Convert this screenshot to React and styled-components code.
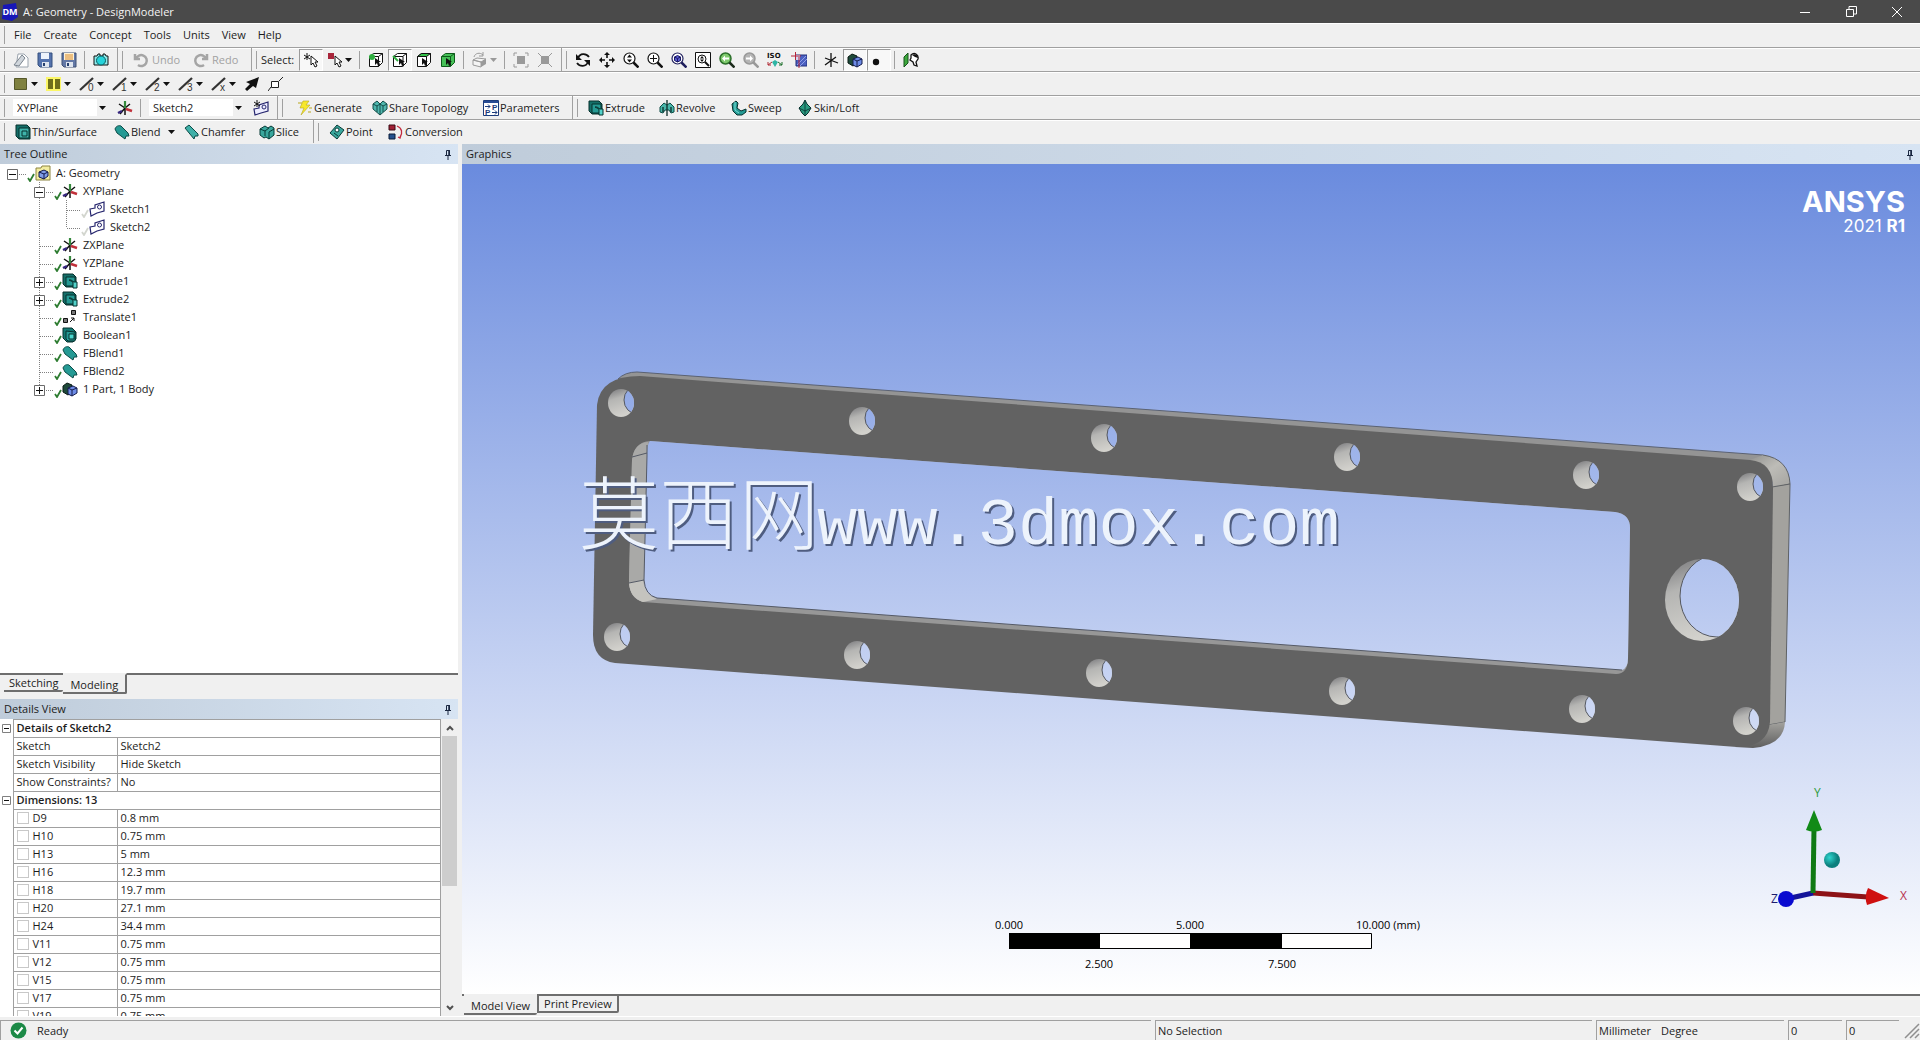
import React, { useState } from 'react'
import styled, { createGlobalStyle, css } from 'styled-components'

const GlobalStyle = createGlobalStyle`
  * {
    box-sizing: border-box;
  }

  body {
    margin: 0;
    background: #f0f0f0;
    color: #1c1c1c;
    font-family: "Open Sans", "Noto Sans", sans-serif;
    font-size: 11px;
    line-height: 16px;
    overflow: hidden;
  }

  button, input, select {
    font: inherit;
    color: inherit;
  }
`

const Window = styled.div`
  display: flex;
  flex-direction: column;
  height: 100vh;
`

// Title bar
const TitleBar = styled.header`
  display: flex;
  align-items: center;
  height: 23px;
  flex: none;
  background: #4a4a4a;
  color: #f4f4f4;
`

const AppBadge = styled.svg`
  width: 16px;
  height: 18px;
  margin: 0 5px 0 2px;
`

const Title = styled.h1`
  flex: 1;
  margin: 0;
  font-size: 11px;
  font-weight: 400;
`

const WindowButton = styled.button`
  display: flex;
  align-items: center;
  justify-content: center;
  width: 46px;
  height: 20px;
  padding: 0;
  border: 0;
  background: none;
  color: #fff;
`

// Menu and toolbars
const Bar = styled.div`
  display: flex;
  align-items: stretch;
  height: ${(props) => (props.$menu ? '25px' : '24px')};
  flex: none;
  border-bottom: 1px solid ${(props) => (props.$last ? '#f0f0f0' : '#a0a0a0')};
  box-shadow: inset 0 1px #fff;
`

const Group = styled.div`
  display: flex;
  align-items: center;
  padding-right: ${(props) => (props.$open ? '0' : '4px')};
  border-right: ${(props) => (props.$open ? '0' : '1px solid #a0a0a0')};

  &::before {
    content: '';
    flex: none;
    width: 1px;
    height: 18px;
    margin: 0 4px;
    background: #a0a0a0;
  }
`

const MenuItem = styled.button`
  padding: 0 7px 0 5px;
  border: 0;
  background: none;
`

const Separator = styled.span`
  width: 1px;
  height: 18px;
  margin: 0 4px 0 3px;
  background: #a0a0a0;
`

const ToolButton = styled.button`
  display: flex;
  align-items: center;
  justify-content: center;
  width: ${(props) => (props.$menu ? '33px' : '24px')};
  height: 22px;
  padding: 0;
  border: 1px solid transparent;
  background: none;
  gap: 2px;

  ${(props) => props.$pressed && css`
    border-color: #9a9a9a #fff #fff #9a9a9a;
    background: #f8f8f8;
  `}
`

const TextButton = styled.button`
  display: flex;
  align-items: center;
  width: ${(props) => props.$width}px;
  height: 22px;
  padding: 0 0 0 ${(props) => (props.$wide ? '6px' : '4px')};
  border: 0;
  background: none;
  gap: ${(props) => (props.$wide ? '3px' : '1px')};
  white-space: nowrap;

  &:disabled {
    color: #a2a2a2;
  }
`

const SelectCaption = styled.span`
  width: 38px;
`

const Labeled = styled.div`
  display: flex;
  align-items: center;
  padding-left: ${(props) => props.$space || 2}px;
`

const Combo = styled.label`
  display: flex;
  align-items: center;
  width: 93px;
  gap: 2px;
  margin: 0 7px 0 4px;

  select {
    flex: 1;
    height: 17px;
    padding: 0 4px;
    border: 0;
    background: #fff;
    appearance: none;
  }
`

const Glyph = styled.svg`
  flex: none;
  width: 16px;
  height: 16px;
`

const CaretShape = styled.svg`
  flex: none;
  width: 7px;
  height: 4px;
  margin-left: ${(props) => (props.$far ? '6px' : '0')};
`

// Work area
const Workspace = styled.main`
  display: flex;
  flex: 1;
  min-height: 0;
  gap: 4px;
`

const SideColumn = styled.aside`
  display: flex;
  flex-direction: column;
  width: 458px;
  flex: none;
`

const Stage = styled.section`
  display: flex;
  flex-direction: column;
  flex: 1;
  min-width: 0;
`

const PanelHeader = styled.div`
  display: flex;
  align-items: center;
  justify-content: space-between;
  height: 20px;
  flex: none;
  padding: 0 6px 0 4px;
  background: linear-gradient(90deg, #bfccda, #d7e4f3);

  h2 {
    margin: 0;
    font-size: 11px;
    font-weight: 400;
  }
`

const PinButton = styled.button`
  display: flex;
  padding: 0;
  border: 0;
  background: none;
`

const TreeList = styled.ul`
  flex: 1;
  min-height: 0;
  margin: 0;
  padding: 0;
  list-style: none;
  background: #fff;
`

const TreeRow = styled.li`
  display: flex;
  align-items: center;
  height: 18px;
`

const Guide = styled.svg`
  flex: none;
  width: 27px;
  height: 18px;
`

const Tick = styled.svg`
  flex: none;
  width: 8px;
  height: 9px;
  margin-top: 8px;
`

const TreeLabel = styled.button`
  margin-left: 4px;
  padding: 0 1px;
  border: 0;
  background: none;
  line-height: 18px;
`

const TabStrip = styled.div`
  display: flex;
  align-items: flex-start;
  height: ${(props) => (props.$tall ? '26px' : '22px')};
  flex: none;
  padding-left: ${(props) => (props.$tall ? '4px' : '2px')};
  border-top: 2px solid #6e6e6e;
`

const Tab = styled.button`
  height: ${(props) => (props.$active ? '21px' : '19px')};
  margin-top: -2px;
  padding: ${(props) => (props.$active ? '3px 7px 0' : '1px 5px 0')};
  border: 0 solid #6e6e6e;
  border-top: ${(props) => (props.$active ? '2px solid #f0f0f0' : '2px solid #6e6e6e')};
  border-bottom-width: 2px;
  border-right-width: ${(props) => (props.$edge ? '2px' : '0')};
  border-left-width: ${(props) => (props.$boxed ? '2px' : '0')};
  border-radius: 0 0 2px 0;
  background: #f0f0f0;
  line-height: 14px;
`

const DetailsPanel = styled.div`
  display: flex;
  flex-direction: column;
  height: 317px;
  flex: none;
`

const DetailsBody = styled.div`
  display: flex;
  flex: 1;
  min-height: 0;
  background: #fff;
`

const TableClip = styled.div`
  flex: 1;
  overflow: hidden;
`

const Table = styled.table`
  width: 100%;
  border-collapse: collapse;
  table-layout: fixed;

  tr {
    height: 18px;
  }

  th, td {
    padding: 0 3px 1px;
    border: 1px solid #a0a0a0;
    line-height: 16px;
    text-align: left;
    font-weight: 400;
    white-space: nowrap;
  }

  th[colspan] {
    font-weight: 600;
  }
`

const Gutter = styled.td`
  && {
    padding: 0 0 0 2px;
    border-width: 0 1px 0 0;
  }
`

const Fold = styled.button`
  display: flex;
  padding: 0;
  border: 0;
  background: none;
`

const DimensionLabel = styled.label`
  display: flex;
  align-items: center;
  gap: 4px;

  input {
    width: 12px;
    height: 12px;
    margin: 0;
    border: 1px solid #c8c8c8;
    background: #fff;
    appearance: none;
  }
`

const ScrollTrack = styled.div`
  display: flex;
  flex-direction: column;
  width: 17px;
  padding: 0 1px;
  background: #f0f0f0;
`

const ScrollArrow = styled.button`
  display: flex;
  align-items: center;
  justify-content: center;
  height: 17px;
  padding: 0;
  border: 0;
  background: none;
`

const ScrollThumb = styled.div`
  height: 150px;
  margin-bottom: auto;
  background: #cdcdcd;
`

const Viewport = styled.div`
  position: relative;
  flex: 1;
  min-height: 0;
  background: linear-gradient(#6a8bde, #fff);
`

const Scene = styled.svg`
  display: block;
  width: 100%;
  height: 100%;
`

const Brand = styled.div`
  position: absolute;
  top: 22px;
  right: 15px;
  color: #fff;
  font-family: Inter, sans-serif;
  font-size: 17px;
  line-height: 16px;
  text-align: right;

  strong {
    display: block;
    font-size: 29px;
    font-weight: 700;
    line-height: 32px;
  }
`

// Status bar
const StatusBar = styled.footer`
  display: flex;
  height: 24px;
  flex: none;
  gap: 4px;
  padding-top: 3px;
  border-top: 1px solid #fff;
`

const StatusCell = styled.div`
  display: flex;
  align-items: center;
  flex: ${(props) => (props.$width ? `0 0 ${props.$width}px` : 1)};
  gap: 10px;
  padding-left: ${(props) => (props.$width ? '2px' : '9px')};
  border: 0 solid #a0a0a0;
  border-top-width: 1px;
  border-left-width: 1px;
`

const Caret = ({ far, color = '#111' }) => (
  <CaretShape viewBox="0 0 7 4" $far={far} aria-hidden="true">
    <path d="M0 0h7L3.5 4z" fill={color} />
  </CaretShape>
)

const TEAL = '#259a94'

const cursor = <path d="M8 4v9l2-2 2 4 2-1-2-4h3z" fill="#fff" stroke="#111" />
const cubeFrame = 'M1.500 4.500l4-3h9v9l-4 4h-9z'
const lens = (ring = '#111') => (
  <>
    <circle cx="6.500" cy="6.500" r="5.500" fill="#fff" stroke={ring} strokeWidth="1.200" />
    <path d="M10.500 10.500l5 5" stroke={ring} strokeWidth="2.500" />
  </>
)
const edgeLine = (label) => (
  <>
    <path d="M1 14L14 2" stroke="#333" strokeWidth="2.200" />
    <text x="9" y="15" fontSize="10" fontFamily="Liberation Sans, sans-serif" fill="#333">{label}</text>
  </>
)

const drawings = {
  newSketch: <><path d="M5 2h6l4 4v9H3z" fill="#fff" stroke="#9aa3ad" /><path d="M1 13L9 3l3 3-6 8z" fill="#cfd5db" stroke="#7b858f" /></>,
  save: <><path d="M1 1h14v14H3l-2-2z" fill="#5573ad" stroke="#34507f" /><path d="M4 1h8v6H4z" fill="#eef3fb" /><path d="M5 10h7v5H5z" fill="#dfe5ee" /><path d="M6 11h2v3H6z" fill="#27406f" /></>,
  saveAll: <><path d="M1 1h14v14H3l-2-2z" fill="#6378a6" stroke="#3f5075" /><path d="M3 1h10v7H3z" fill="#fff3d6" /><path d="M4 3h8M4 5h8M4 7h8" stroke="#d98a2b" /><path d="M5 10h7v5H5z" fill="#dfe5ee" /><path d="M6 11h2v3H6z" fill="#27406f" /></>,
  camera: <><path d="M1 4h3l1-2h2v2h3V2h2l1 2h2v9H1z" fill="#8ee9ea" stroke="#111" /><circle cx="8" cy="8.500" r="4.500" fill="#25d3da" stroke="#0a5c60" /></>,
  undo: <path d="M2 2v5h5M3 7a5.500 5.500 0 1 1 2 6" fill="none" stroke="#a5a5a5" strokeWidth="2.500" />,
  redo: <path d="M14 2v5H9M13 7a5.500 5.500 0 1 0-2 6" fill="none" stroke="#a5a5a5" strokeWidth="2.500" />,
  pick: <><path d="M4 1v7M1 3l6 4M7 3L1 7" stroke="#111" />{cursor}</>,
  pickMode: <><path d="M1 1h6v6H1z" fill="#a8253a" />{cursor}</>,
  cubeVertex: <><path d={cubeFrame} fill="#fff" stroke="#111" /><path d="M1.500 4.500h9v10M10.500 4.500l4-3" fill="none" stroke="#111" /><circle cx="4" cy="5" r="3" fill="#2fae3f" /><path d="M7 6v7l2-2 1 3 2-1-1-3h2z" /></>,
  cubeEdge: <><path d={cubeFrame} fill="#fff" stroke="#111" /><path d="M2 4.500h9v10M10.500 4.500l4-3" fill="none" stroke="#111" /><path d="M1 4l5 5" stroke="#2fae3f" strokeWidth="2" /><path d="M7 6v7l2-2 1 3 2-1-1-3h2z" /></>,
  cubeFace: <><path d={cubeFrame} fill="#fff" stroke="#111" /><path d="M1.500 4.500l4-3h9l-4 3z" fill="#35c24a" stroke="#111" /><path d="M10.500 4.500v10" stroke="#111" /><path d="M6 6v7l2-2 1 3 2-1-1-3h2z" /></>,
  cubeBody: <><path d={cubeFrame} fill="#45c157" stroke="#0d5a1a" /><path d="M1.500 4.500h9v10M10.500 4.500l4-3" fill="none" stroke="#0d5a1a" /><path d="M6 6v7l2-2 1 3 2-1-1-3h2z" /></>,
  extend: <><path d="M1 8l4-2 9 1-5 3zM1 8v5l8 2v-5z" fill="#f4f4f4" stroke="#9a9a9a" /><path d="M9 10l5-3v5l-5 3z" fill="#9a9a9a" /><path d="M2 5c1-4 6-5 9-2M11 0v4H7" fill="none" stroke="#9a9a9a" /></>,
  growBox: <><path d="M4 4h8v8H4z" fill="#9a9a9a" /><path d="M1 4V1h3M12 1h3v3M15 12v3h-3M4 15H1v-3" fill="none" stroke="#9a9a9a" /></>,
  shrinkBox: <><path d="M4 4h8v8H4z" fill="#9a9a9a" /><path d="M1 1l3 3M15 1l-3 3M1 15l3-3M15 15l-3-3" stroke="#9a9a9a" /></>,
  rotate: <><path d="M3 6c2-5 8-5 11-1M13 10c-2 5-8 5-11 1" fill="none" stroke="#111" strokeWidth="1.800" /><path d="M1 2v6h6zM15 14V8H9z" /></>,
  pan: <path d="M8 0l3 3H8.800v3H7.200V3H5zM8 16l3-3H8.800v-3H7.200v3H5zM0 8l3-3v2.200h3v1.600H3V11zM16 8l-3-3v2.200h-3v1.600h3V11z" />,
  zoom: <>{lens()}<path d="M6.500 2.500l2.500 3H4zM6.500 10.500l2.500-3H4z" /></>,
  zoomIn: <>{lens()}<path d="M6.500 3v7M3 6.500h7" stroke="#111" /></>,
  zoomFit: <>{lens('#1f1f5c')}<path d="M3.500 5l3-1.500 3 1.500v3.500l-3 1.500-3-1.500z" fill="#5a5ad0" stroke="#1a1a66" /><path d="M3.500 5l3 1.500 3-1.500M6.500 6.500V10" fill="none" stroke="#1a1a66" /></>,
  zoomBox: <><path d="M.5.5h15v15H.5z" fill="#fff" stroke="#111" /><circle cx="7" cy="7" r="4" fill="none" stroke="#111" /><path d="M10 10l4 4" stroke="#111" strokeWidth="2" /><path d="M7 4l2 2.500H5zM7 10l2-2.500H5z" /></>,
  zoomPrev: <><circle cx="6.500" cy="6.500" r="5.500" fill="#7fca6d" stroke="#2b6f2a" strokeWidth="1.500" /><path d="M10.500 10.500l5 5" stroke="#1c2b1c" strokeWidth="2.500" /><path d="M3 6.500l3-3v2h4v2H6v2z" fill="#fff" /></>,
  zoomNext: <><circle cx="6.500" cy="6.500" r="5.500" fill="#b5b5b5" stroke="#999" strokeWidth="1.500" /><path d="M10.500 10.500l5 5" stroke="#999" strokeWidth="2.500" /><path d="M10 6.500l-3-3v2H3v2h4v2z" fill="#fff" /></>,
  iso: <><text x="0" y="6" fontSize="7" fontWeight="700" fontFamily="DejaVu Sans, sans-serif">ISO</text><path d="M8 8l3 2-3 5-3-5z" fill="#2fb5a5" /><path d="M5 10l-4 3M1 10v3h3" stroke="#b02a35" fill="none" /><path d="M11 10l4 3M15 10v3h-3" stroke="#1d6f2a" fill="none" /></>,
  lookAt: <><path d="M5 3h11v11H5z" fill="#4a5fc0" stroke="#20307c" /><path d="M6 13l9-9M9 14l7-7" stroke="#8fa0ea" /><path d="M5 3h4v5H5z" fill="#cfd6f4" /><path d="M0 4h10M4.500 0v8M8 5v11" stroke="#b5243a" /></>,
  axes: <path d="M8 1v14M2 6l13 5M2 13L13 5" stroke="#111" strokeWidth="1.300" />,
  solids: <><path d="M1 5l4-3 5 2v7l-4 3-5-3z" fill="#1f4a3a" stroke="#0a1a14" /><path d="M6 7l5-2 4 2v5l-5 3-4-2z" fill="#6d8be6" stroke="#141c4c" /><path d="M6 7l4 2 5-2M10 9v6" fill="none" stroke="#141c4c" /></>,
  dot: <circle cx="5" cy="10" r="3.200" />,
  section: <><path d="M1 5l4-4v10l-4 4z" fill="#3da83d" stroke="#17531a" /><path d="M8 3c3-3 8-1 7 4l-2 3 1 4-3-1-1-3-3-2 1-2z" fill="#fff" stroke="#111" strokeWidth="1.300" /><path d="M9 3c3-2 6 0 6 3l-3-1z" /></>,
  olive: <path d="M1.500 2.500h12v11h-12z" fill="#7f8140" stroke="#55572a" />,
  yellowBox: <><path d="M0 1h15v14H0z" fill="#fbf667" /><path d="M2 3h5v10H2zM9 3h5v10H9z" fill="#6e6f1c" /></>,
  edge0: edgeLine('0'),
  edge1: edgeLine('1'),
  edge2: edgeLine('2'),
  edge3: edgeLine('3'),
  edgeX: edgeLine('x'),
  arrow: <path d="M15 1l-3 11-3-2-6 5-2-2 5-5-4-2z" />,
  node: <><path d="M3.500 5.500h7v6h-7z" fill="#fff" stroke="#222" /><path d="M0 15l3-4M11 5l4-4" stroke="#222" /></>,
  plane: <><path d="M8 8v7M8 8L2 4M8 8l-5 6M8 8l5-4" stroke="#111" strokeWidth="1.500" /><path d="M8 1v7" stroke="#35893c" strokeWidth="2.200" /><path d="M9 9l6 2" stroke="#c1303a" strokeWidth="2.500" /><path d="M1 13l4-2" stroke="#35257e" strokeWidth="2.500" /></>,
  sketch: <><path d="M1 8l5-1V4l9-3v9L8 12l-6 3z" fill="none" stroke="#26266e" strokeWidth="1.200" /><circle cx="10.500" cy="6" r="2" fill="none" stroke="#26266e" /></>,
  newSketchPlane: <><path d="M1 9l5-1V5l9-3v9l-7 2-6 2z" fill="#eef" stroke="#26266e" strokeWidth="1.200" /><circle cx="11" cy="7" r="2" fill="none" stroke="#26266e" /><path d="M4 0v7M1 2l6 4M7 2L1 6" stroke="#111" /></>,
  bolt: <><path d="M6 1h6l-3 4h4l-9 10 3-7H3z" fill="#f7e82c" stroke="#b9a71c" strokeWidth=".6" /><path d="M1 3h4M12 8h3M11 12h3" stroke="#b9a71c" /></>,
  share: <><path d="M1 4l4-3 3 3 3-3 4 3v5l-7 6-7-6z" fill="#4fb7ae" stroke="#134d49" /><path d="M1 4l4 2 3-2 3 2 4-2M5 6v6M11 6v6M8 4v11" fill="none" stroke="#134d49" /></>,
  params: <><path d="M.5.5h15v15H.5z" fill="#fff" stroke="#1c3c7c" /><path d="M1 1h14v2H1z" fill="#274b94" /><text x="9" y="10" fontSize="8" fontWeight="700" fill="#1c3c7c" fontFamily="Liberation Sans, sans-serif">P</text><text x="2" y="15" fontSize="8" fontWeight="700" fill="#1c3c7c" fontFamily="Liberation Sans, sans-serif">P</text><path d="M2 6.500h5M5 4.500l2 2-2 2M9 12.500h5M12 10.500l2 2-2 2" fill="none" stroke="#1c3c7c" /></>,
  extrude: <><path d="M1 1h10l3 3v8l-3 2H4l-3-3z" fill="#146e69" stroke="#06302d" /><path d="M4 4h9v9H4z" fill={TEAL} stroke="#06302d" /><path d="M7 7l4 2v6h4V9h-3L9 7z" fill="#53d2ca" stroke="#06302d" /></>,
  revolve: <><path d="M1 7l4-4 3 2 3-2 4 4v5l-3 1-2-3H6l-2 3-3-1z" fill="#48b5a9" stroke="#0c4b45" /><path d="M8 0v16M4 7v5M12 7v5" stroke="#0c2b28" strokeWidth="1.300" /></>,
  sweep: <><path d="M1 4l4-3 2 2-1 5 4 3 5-2v3l-4 3H6l-4-4z" fill={TEAL} stroke="#06302d" /><path d="M4 2v8l4 3" fill="none" stroke="#7be0d8" /></>,
  loft: <><path d="M8 0l2 4 4 4-3 5-3 3-3-3-3-5 4-4z" fill="#2b9a80" stroke="#06302d" /><path d="M2 8l6 3 6-3M8 1v15" fill="none" stroke="#06302d" strokeWidth=".8" /></>,
  thin: <><path d="M1 1h11l3 3v11H4l-3-3z" fill="#146e69" stroke="#06302d" /><path d="M4 4h10v10H4zM7 7h5v5H7z" fill="#3fb3ab" stroke="#06302d" /></>,
  blend: <path d="M1 5c1-3 4-4 6-3l7 7 1 3h-3l-1 3-8-6z" fill={TEAL} stroke="#0b4b47" />,
  chamfer: <path d="M1 4l4-3 9 9v2h-3l-1 3z" fill="#3fb0a8" stroke="#0b4b47" />,
  slice: <><path d="M1 5l5-3 3 2 3-2 3 2v7l-5 4-3-2-2 1-4-3z" fill="#3aa79d" stroke="#073a36" /><path d="M1 5l5 2 4-3M6 7v5M10 8l5-3M10 8v7" fill="none" stroke="#073a36" /></>,
  point: <><path d="M1 9l7-8 7 5-7 9z" fill="#3aa79d" stroke="#073a36" /><circle cx="8" cy="6" r="2" fill="#fff" stroke="#073a36" /><path d="M5 9l4 3" stroke="#073a36" /></>,
  convert: <><path d="M1 1h6v5H1z" fill="#a12035" stroke="#3b0b14" /><path d="M1 10h6v5H1z" fill="#24508c" stroke="#0b1d3b" /><path d="M9 2c5 2 6 7 3 11M10 13l2 1 1-3" fill="none" stroke="#c22b3e" strokeWidth="1.300" /></>,
  model: <><path d="M1 3h5l1-2h8v14H1z" fill="#f3eda0" stroke="#8c8440" /><path d="M4 7l5-2 4 2v4l-4 3-5-2z" fill="#7f9ce8" stroke="#12194c" /><path d="M4 7l5 2 4-2M9 9v5" fill="none" stroke="#12194c" /></>,
  translate: <><path d="M9.500 1.500h4v4h-4zM1.500 9.500h4v4h-4z" fill="#777" stroke="#111" /><path d="M8 13l4-4M9 9h3v3" fill="none" stroke="#111" /></>,
  boolean: <><path d="M1 1h9l4 4v7l-3 3H5l-4-4z" fill="#137a74" stroke="#06302d" /><path d="M4 4l9 1v9H6l-2-2z" fill={TEAL} stroke="#06302d" /><path d="M7 7h5v5H7z" fill="#49d6cd" stroke="#06302d" /></>,
}

const Icon = ({ name }) => (
  <Glyph viewBox="0 0 16 16" fill="#111" aria-hidden="true">{drawings[name]}</Glyph>
)

const Tool = ({ icon, label, menu, pressed, muted }) => (
  <ToolButton type="button" title={label} aria-label={label} $menu={menu} $pressed={pressed}>
    <Icon name={icon} />
    {menu && <Caret color={muted ? '#999' : '#111'} />}
  </ToolButton>
)

const Action = ({ icon, children, width, menu, wide, disabled }) => (
  <TextButton type="button" $width={width} $wide={wide} disabled={disabled}>
    <Icon name={icon} />
    {children}
    {menu && <Caret far />}
  </TextButton>
)

const Pin = () => (
  <PinButton type="button" aria-label="Auto hide">
    <svg width="8" height="11" viewBox="0 0 8 11">
      <path d="M2.500 6V1.500h3V6M1 6.500h6M4 7v4" fill="none" stroke="#1a2740" />
      <path d="M5 1v5" stroke="#1a2740" strokeWidth="1.500" />
    </svg>
  </PinButton>
)

const menus = ['File', 'Create', 'Concept', 'Tools', 'Units', 'View', 'Help']

const viewTools = [
  ['rotate', 'Rotate'],
  ['pan', 'Pan'],
  ['zoom', 'Zoom'],
  ['zoomIn', 'Box zoom'],
  ['zoomFit', 'Zoom to fit'],
  ['zoomBox', 'Magnifier'],
  ['zoomPrev', 'Previous view'],
  ['zoomNext', 'Next view'],
  ['iso', 'Isometric view'],
  ['lookAt', 'Look at'],
]

const edgeTools = ['olive', 'yellowBox', 'edge0', 'edge1', 'edge2', 'edge3', 'edgeX']

const treeItems = [
  { label: 'A: Geometry', icon: 'model', level: 0, box: 'minus' },
  { label: 'XYPlane', icon: 'plane', level: 1, box: 'minus' },
  { label: 'Sketch1', icon: 'sketch', level: 2, faint: true },
  { label: 'Sketch2', icon: 'sketch', level: 2, faint: true, last: true },
  { label: 'ZXPlane', icon: 'plane', level: 1 },
  { label: 'YZPlane', icon: 'plane', level: 1 },
  { label: 'Extrude1', icon: 'extrude', level: 1, box: 'plus' },
  { label: 'Extrude2', icon: 'extrude', level: 1, box: 'plus' },
  { label: 'Translate1', icon: 'translate', level: 1 },
  { label: 'Boolean1', icon: 'boolean', level: 1 },
  { label: 'FBlend1', icon: 'blend', level: 1 },
  { label: 'FBlend2', icon: 'blend', level: 1 },
  { label: '1 Part, 1 Body', icon: 'solids', level: 1, box: 'plus', last: true },
]

const sketchDetails = [
  ['Sketch', 'Sketch2'],
  ['Sketch Visibility', 'Hide Sketch'],
  ['Show Constraints?', 'No'],
]

const dimensions = [
  ['D9', '0.8 mm'],
  ['H10', '0.75 mm'],
  ['H13', '5 mm'],
  ['H16', '12.3 mm'],
  ['H18', '19.7 mm'],
  ['H20', '27.1 mm'],
  ['H24', '34.4 mm'],
  ['V11', '0.75 mm'],
  ['V12', '0.75 mm'],
  ['V15', '0.75 mm'],
  ['V17', '0.75 mm'],
  ['V19', '0.75 mm'],
]

const TreeGuides = ({ item }) => {
  const dotted = { stroke: '#808080', strokeDasharray: '1 1' }
  return (
    <>
      {item.level > 0 && <Guide />}
      {item.level === 2 && (
        <Guide viewBox="0 0 27 18"><path d="M12.500 0v18" {...dotted} /></Guide>
      )}
      <Guide viewBox="0 0 27 18">
        {item.level > 0 && <path d={item.last ? 'M12.500 0v10' : 'M12.500 0v18'} {...dotted} />}
        <path d="M13 10.500h14" {...dotted} />
        {item.box && (
          <>
            <path d="M7.500 5.500h10v10h-10z" fill="#fff" stroke="#6b6b6b" />
            <path d={item.box === 'plus' ? 'M9 10.500h7M12.500 7v7' : 'M9 10.500h7'} stroke="#111" />
          </>
        )}
      </Guide>
    </>
  )
}

const FoldBox = ({ label }) => (
  <Fold type="button" aria-label={label}>
    <svg width="9" height="9" viewBox="0 0 9 9">
      <path d="M.5.5h8v8h-8z" fill="#fff" stroke="#808080" />
      <path d="M2 4.500h5" stroke="#111" />
    </svg>
  </Fold>
)

const holes = [
  [621, 403], [862, 421], [1104, 438], [1347, 457], [1586, 475], [1750, 487],
  [617, 637], [857, 655], [1099, 673], [1342, 691], [1582, 709], [1746, 721],
]

const Hole = ({ id, x, y, rx, ry, dx, dy }) => (
  <g>
    <clipPath id={id}><ellipse cx={x} cy={y} rx={rx} ry={ry} /></clipPath>
    <ellipse cx={x} cy={y} rx={rx} ry={ry} fill="url(#bore)" />
    <ellipse cx={x + dx} cy={y + dy} rx={rx} ry={ry} fill="url(#sky)" stroke="#55585f" clipPath={`url(#${id})`} />
  </g>
)

const Model = () => (
  <Scene viewBox="462 164 1458 830" role="img" aria-label="Flange plate with twelve bolt holes">
    <defs>
      <linearGradient id="sky" gradientUnits="userSpaceOnUse" x1="0" y1="164" x2="0" y2="994">
        <stop offset="0" stopColor="#6a8bde" />
        <stop offset="1" stopColor="#fff" />
      </linearGradient>
      <linearGradient id="bore" x1="0" y1="0" x2=".3" y2="1">
        <stop offset="0" stopColor="#77777a" />
        <stop offset=".4" stopColor="#b5b5b3" />
        <stop offset="1" stopColor="#d2d1cc" />
      </linearGradient>
      <linearGradient id="corner" x1="0" y1="0" x2="1" y2="1">
        <stop offset="0" stopColor="#8d8d8b" />
        <stop offset=".5" stopColor="#bdbcb7" />
        <stop offset="1" stopColor="#a4a39f" />
      </linearGradient>
      <linearGradient id="foot" x1="0" y1="0" x2="0" y2="1">
        <stop offset="0" stopColor="#a3a29e" />
        <stop offset="1" stopColor="#5e5e5e" />
      </linearGradient>
      <radialGradient id="cyanBall" cx=".35" cy=".35">
        <stop offset="0" stopColor="#2fd6cf" />
        <stop offset="1" stopColor="#0c7f7d" />
      </radialGradient>
    </defs>

    {/* plate: back edges first, then the front face */}
    <path d="M618 379Q625 372 637 372L1763 455L1753 463L640 378Z" fill="#949494" stroke="#5b6272" />
    <path d="M1750 460L1763 455Q1789 459 1790 484L1773 488Q1772 464 1745 461Z" fill="url(#corner)" />
    <path d="M1763 455Q1789 459 1790 484L1773 488" fill="none" stroke="#5f6265" />
    <path d="M1790 484L1785 722L1768 725L1772 487Z" fill="#a3a29e" stroke="#5f6265" />
    <path d="M1785 722Q1784 745 1753 748L1735 747L1768 725Z" fill="url(#foot)" />
    <path
      d="M640 376L1750 460Q1773 462 1773 488L1770 722Q1768 747 1737 747L615 663Q593 660 593 635L597 405Q600 376 640 376Z"
      fill="#626262"
    />
    <path
      d="M650 441L1615 512Q1630 514 1630 528L1628 658Q1628 674 1616 674L643 602Q629 598 629 580L632 460Q634 442 650 441Z"
      fill="#979797"
    />
    <path d="M632 460Q634 443 648 442L647 456L644 580Q645 595 657 599L643 602Q629 598 629 580Z" fill="#a9a9a7" />
    <path d="M629 583L643 580Q645 595 657 599L643 602Q630 598 629 583Z" fill="#c4c3be" />
    <path
      d="M650 441L1615 512Q1630 514 1630 528L1628 658Q1628 668 1622 670L657 598Q644 595 644 580L647 456Q647 444 650 441Z"
      fill="url(#sky)"
    />
    <path d="M647 445V456L644 580Q645 595 657 598L1622 670M632 457L647 453M629 583L644 580" fill="none" stroke="#555a66" />

    {holes.map(([x, y], i) => (
      <Hole key={i} id={`hole${i}`} x={x} y={y} rx={13} ry={14} dx={16} dy={-3} />
    ))}
    <Hole id="port" x={1702} y={600} rx={37} ry={41} dx={15} dy={-4} />

    {/* watermark */}
    <g fontFamily="'Liberation Mono', 'Noto Sans CJK SC', monospace" fontSize="67">
      {[['#4f5d80', 2], ['#edf3fc', 0]].map(([fill, d]) => (
        <g key={fill} fill={fill} aria-hidden={d > 0}>
          <text x={579 + d} y={543 + d} fontSize="80" fontWeight="300" fontFamily="'Noto Sans CJK SC', sans-serif">莫西网</text>
          <text x={817 + d} y={544 + d}>www.3dmox.com</text>
        </g>
      ))}
    </g>

    {/* scale ruler */}
    <path d="M1009.500 933.500h362v15h-362z" fill="#fff" stroke="#000" />
    <path d="M1009 933h91v16h-91zM1190 933h92v16h-92z" />
    <g fontSize="11" textAnchor="middle">
      <text x="1009" y="929">0.000</text>
      <text x="1190" y="929">5.000</text>
      <text x="1388" y="929">10.000 (mm)</text>
      <text x="1099" y="968">2.500</text>
      <text x="1282" y="968">7.500</text>
    </g>

    {/* orientation triad */}
    <path d="M1813 893L1868 897" stroke="#8d1216" strokeWidth="5" />
    <path d="M1868 888L1889 898L1867 905Q1864 896 1868 888Z" fill="#cf1010" />
    <path d="M1813 893L1786 899" stroke="#14149a" strokeWidth="5" />
    <path d="M1813 893L1814 828" stroke="#0f7a14" strokeWidth="5" />
    <path d="M1814 810L1822 830Q1814 833 1806 830Z" fill="#118a17" />
    <circle cx="1786" cy="899" r="8" fill="#0a0ad0" />
    <circle cx="1832" cy="860" r="8" fill="url(#cyanBall)" />
    <g fontSize="12">
      <text x="1814" y="797" fill="#2d9a3c">Y</text>
      <text x="1900" y="900" fill="#b8324e">X</text>
      <text x="1771" y="903" fill="#1d1d70">Z</text>
    </g>
  </Scene>
)

export default function App() {
  const [plane, setPlane] = useState('XYPlane')
  const [sketch, setSketch] = useState('Sketch2')

  return (
    <>
      <GlobalStyle />
      <Window>
        <TitleBar>
          <AppBadge viewBox="0 0 16 18">
            <path d="M1 2L14 0l2 14-6 4L0 16z" fill="#1717b8" />
            <text x="8" y="12" fontSize="9" fontWeight="700" fill="#fff" textAnchor="middle">DM</text>
          </AppBadge>
          <Title>A: Geometry - DesignModeler</Title>
          <WindowButton type="button" aria-label="Minimize">
            <svg width="10" height="10"><path d="M0 5.500h10" stroke="currentColor" /></svg>
          </WindowButton>
          <WindowButton type="button" aria-label="Restore">
            <svg width="11" height="11"><path d="M.5 3.500h7v7h-7zM3 3V.5h7.500V8H8" fill="none" stroke="currentColor" /></svg>
          </WindowButton>
          <WindowButton type="button" aria-label="Close">
            <svg width="10" height="10"><path d="M0 0l10 10M10 0L0 10" stroke="currentColor" /></svg>
          </WindowButton>
        </TitleBar>

        <Bar as="nav" $menu>
          <Group $open>
            {menus.map((menu) => <MenuItem type="button" key={menu}>{menu}</MenuItem>)}
          </Group>
        </Bar>

        <Bar>
          <Group>
            <Tool icon="newSketch" label="New" />
            <Tool icon="save" label="Save" />
            <Tool icon="saveAll" label="Export" />
            <Separator />
            <Tool icon="camera" label="Capture image" />
          </Group>
          <Group>
            <Action icon="undo" width={60} wide disabled>Undo</Action>
            <Action icon="redo" width={60} wide disabled>Redo</Action>
          </Group>
          <Group>
            <SelectCaption>Select:</SelectCaption>
            <Tool icon="pick" label="New selection" pressed />
            <Tool icon="pickMode" label="Select mode" menu />
            <Separator />
            <Tool icon="cubeVertex" label="Points" />
            <Tool icon="cubeEdge" label="Edges" pressed />
            <Tool icon="cubeFace" label="Faces" />
            <Tool icon="cubeBody" label="Bodies" />
            <Separator />
            <Tool icon="extend" label="Extend selection" menu muted />
            <Separator />
            <Tool icon="growBox" label="Expand" />
            <Tool icon="shrinkBox" label="Shrink" />
          </Group>
          <Group $open>
            {viewTools.map(([icon, label]) => <Tool key={icon} icon={icon} label={label} />)}
            <Separator />
            <Tool icon="axes" label="Display plane" />
            <Tool icon="solids" label="Display model" pressed />
            <Tool icon="dot" label="Display points" pressed />
            <Separator />
            <Tool icon="section" label="Look at face" />
          </Group>
        </Bar>

        <Bar>
          <Group $open>
            {edgeTools.map((icon) => <Tool key={icon} icon={icon} label={icon} menu />)}
            <Tool icon="arrow" label="Edge direction" />
            <Tool icon="node" label="Vertex" />
          </Group>
        </Bar>

        <Bar>
          <Group>
            <Combo>
              <select aria-label="Active plane" value={plane} onChange={(e) => setPlane(e.target.value)}>
                <option>XYPlane</option>
                <option>ZXPlane</option>
                <option>YZPlane</option>
              </select>
              <Caret />
            </Combo>
            <Tool icon="plane" label="New plane" />
            <Separator />
            <Combo>
              <select aria-label="Active sketch" value={sketch} onChange={(e) => setSketch(e.target.value)}>
                <option>Sketch1</option>
                <option>Sketch2</option>
              </select>
              <Caret />
            </Combo>
            <Tool icon="newSketchPlane" label="New sketch" />
          </Group>
          <Group>
            <Labeled $space={6}>
              <Action icon="bolt" width={75}>Generate</Action>
              <Action icon="share" width={111}>Share Topology</Action>
              <Action icon="params" width={89}>Parameters</Action>
            </Labeled>
          </Group>
          <Group $open>
            <Labeled>
              <Action icon="extrude" width={71}>Extrude</Action>
              <Action icon="revolve" width={72}>Revolve</Action>
              <Action icon="sweep" width={66}>Sweep</Action>
              <Action icon="loft" width={75}>Skin/Loft</Action>
            </Labeled>
          </Group>
        </Bar>

        <Bar $last>
          <Group>
            <Labeled>
              <Action icon="thin" width={99}>Thin/Surface</Action>
              <Action icon="blend" width={70} menu>Blend</Action>
              <Action icon="chamfer" width={75}>Chamfer</Action>
              <Action icon="slice" width={54}>Slice</Action>
            </Labeled>
          </Group>
          <Group $open>
            <Labeled>
              <Action icon="point" width={59}>Point</Action>
              <Action icon="convert" width={90}>Conversion</Action>
            </Labeled>
          </Group>
        </Bar>

        <Workspace>
          <SideColumn>
            <PanelHeader><h2>Tree Outline</h2><Pin /></PanelHeader>
            <TreeList>
              {treeItems.map((item) => (
                <TreeRow key={item.label}>
                  <TreeGuides item={item} />
                  <Tick viewBox="0 0 8 9">
                    <path d="M1 5l2 3 4-7" fill="none" stroke={item.faint ? '#d3d6cf' : '#2f7d32'} strokeWidth="1.800" />
                  </Tick>
                  <Icon name={item.icon} />
                  <TreeLabel type="button">{item.label}</TreeLabel>
                </TreeRow>
              ))}
            </TreeList>
            <TabStrip $tall>
              <Tab type="button">Sketching</Tab>
              <Tab type="button" $active $edge>Modeling</Tab>
            </TabStrip>

            <DetailsPanel>
              <PanelHeader><h2>Details View</h2><Pin /></PanelHeader>
              <DetailsBody>
                <TableClip>
                  <Table>
                    <colgroup>
                      <col width="13" />
                      <col width="104" />
                      <col />
                    </colgroup>
                    <tbody>
                      <tr>
                        <Gutter><FoldBox label="Collapse sketch details" /></Gutter>
                        <th colSpan="2">Details of Sketch2</th>
                      </tr>
                      {sketchDetails.map(([name, value]) => (
                        <tr key={name}>
                          <Gutter />
                          <th scope="row">{name}</th>
                          <td>{value}</td>
                        </tr>
                      ))}
                      <tr>
                        <Gutter><FoldBox label="Collapse dimensions" /></Gutter>
                        <th colSpan="2">Dimensions: 13</th>
                      </tr>
                      {dimensions.map(([name, value]) => (
                        <tr key={name}>
                          <Gutter />
                          <th scope="row">
                            <DimensionLabel><input type="checkbox" />{name}</DimensionLabel>
                          </th>
                          <td>{value}</td>
                        </tr>
                      ))}
                    </tbody>
                  </Table>
                </TableClip>
                <ScrollTrack>
                  <ScrollArrow type="button" aria-label="Scroll up">
                    <svg width="8" height="6"><path d="M1 5l3-3 3 3" fill="none" stroke="#505050" strokeWidth="2" /></svg>
                  </ScrollArrow>
                  <ScrollThumb />
                  <ScrollArrow type="button" aria-label="Scroll down">
                    <svg width="8" height="6"><path d="M1 1l3 3 3-3" fill="none" stroke="#505050" strokeWidth="2" /></svg>
                  </ScrollArrow>
                </ScrollTrack>
              </DetailsBody>
            </DetailsPanel>
          </SideColumn>

          <Stage>
            <PanelHeader><h2>Graphics</h2><Pin /></PanelHeader>
            <Viewport>
              <Model />
              <Brand>
                <strong>ANSYS</strong>
                2021 <b>R1</b>
              </Brand>
            </Viewport>
            <TabStrip>
              <Tab type="button" $active>Model View</Tab>
              <Tab type="button" $edge $boxed>Print Preview</Tab>
            </TabStrip>
          </Stage>
        </Workspace>

        <StatusBar>
          <StatusCell>
            <svg width="17" height="17" viewBox="0 0 17 17">
              <circle cx="8.500" cy="8.500" r="8" fill="#1c8a47" />
              <path d="M4.500 8.500l3 3 5-6" fill="none" stroke="#fff" strokeWidth="2" />
            </svg>
            Ready
          </StatusCell>
          <StatusCell $width={437}>No Selection</StatusCell>
          <StatusCell $width={188}><span>Millimeter</span><span>Degree</span></StatusCell>
          <StatusCell $width={54}>0</StatusCell>
          <StatusCell $width={53}>0</StatusCell>
          <svg width="17" height="19" viewBox="0 0 17 19">
            <path d="M2 18L16 4M7 18l9-9M12 18l4-4" stroke="#8f8f8f" strokeWidth="1.500" />
          </svg>
        </StatusBar>
      </Window>
    </>
  )
}
